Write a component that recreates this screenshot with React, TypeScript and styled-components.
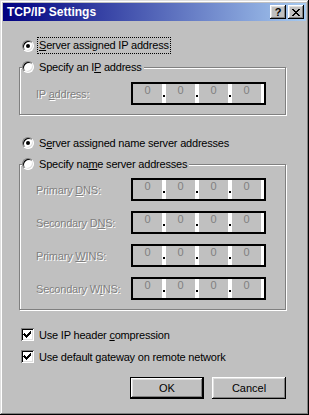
import styled, { createGlobalStyle } from 'styled-components'
import { ReactNode } from 'react'

const GlobalStyle = createGlobalStyle`
	html, body {
		margin: 0;
		padding: 0;
		background: #c0c0c0;
	}
	body {
		font-family: "Liberation Sans", Arial, sans-serif;
		font-size: 11px;
		letter-spacing: -0.2px;
		color: #000;
	}
`

const raised = `
	box-shadow: inset -1px -1px 0 #000, inset 1px 1px 0 #fff, inset -2px -2px 0 #808080, inset 2px 2px 0 #dfdfdf;
`

const Window = styled.div`
	width: 309px;
	height: 415px;
	box-sizing: border-box;
	padding: 3px;
	background: #c0c0c0;
	box-shadow: inset -1px -1px 0 #000, inset 1px 1px 0 #dfdfdf, inset -2px -2px 0 #808080, inset 2px 2px 0 #fff;
	display: flex;
	flex-direction: column;
`

const TitleBar = styled.div`
	height: 18px;
	display: flex;
	align-items: center;
	padding: 0 2px 0 4px;
	background: linear-gradient(to right, #000080, #a6caf0);
`

const Title = styled.span`
	color: #fff;
	font-weight: bold;
	font-size: 12px;
	letter-spacing: 0;
`

const TitleButtons = styled.div`
	margin-left: auto;
	display: flex;
	gap: 2px;
`

const TitleButton = styled.span`
	width: 16px;
	height: 14px;
	box-sizing: border-box;
	background: #c0c0c0;
	${raised}
	display: flex;
	align-items: center;
	justify-content: center;
	font-weight: bold;
	font-size: 11px;
	letter-spacing: 0;
	line-height: 1;
`

const Body = styled.div`
	flex: 1;
	display: flex;
	flex-direction: column;
	padding: 16px 20px 0 16px;
`

const OptionRow = styled.div<{ $indent?: number }>`
	height: 17px;
	display: flex;
	align-items: center;
	gap: 5px;
	padding-left: ${({ $indent = 3 }) => $indent}px;
	white-space: nowrap;
`

const Radio = styled.span<{ $checked?: boolean }>`
	position: relative;
	flex: none;
	width: 12px;
	height: 12px;
	box-sizing: border-box;
	border-radius: 50%;
	border: 1px solid;
	border-color: #808080 #fff #fff #808080;
	background: #fff;
	box-shadow: inset 1px 1px 0 #000, inset -1px -1px 0 #dfdfdf;

	&::after {
		content: '';
		display: ${({ $checked }) => ($checked ? 'block' : 'none')};
		position: absolute;
		left: 3px;
		top: 3px;
		width: 4px;
		height: 4px;
		border-radius: 50%;
		background: #000;
	}
`

const CheckBox = styled.span`
	flex: none;
	width: 13px;
	height: 13px;
	box-sizing: border-box;
	background: #fff;
	box-shadow: inset 1px 1px 0 #808080, inset -1px -1px 0 #fff, inset 2px 2px 0 #000, inset -2px -2px 0 #dfdfdf;
	display: flex;
`

const Label = styled.span<{ $focused?: boolean }>`
	line-height: 15px;
	padding: 0 1px;
	margin-left: -2px;
	border: 1px dotted ${({ $focused }) => ($focused ? '#000' : 'transparent')};
`

const Group = styled.div<{ $gap?: number }>`
	position: relative;
	margin-top: 13px;
	border: 1px solid #808080;
	box-shadow: inset 1px 1px 0 #fff, 1px 1px 0 #fff;
	padding: ${({ $gap = 14 }) => $gap}px 18px 9px 16px;
	display: flex;
	flex-direction: column;
	gap: 10px;
`

const Legend = styled.div`
	position: absolute;
	top: -10px;
	left: 2px;
	background: #c0c0c0;
	padding-right: 2px;
`

const FieldRow = styled.div`
	display: flex;
	align-items: center;
	height: 23px;
`

const FieldLabel = styled.span`
	width: 95px;
	color: #808080;
	text-shadow: 1px 1px 0 #fff;
	white-space: nowrap;
`

const IpBox = styled.div`
	display: flex;
	width: 135px;
	height: 23px;
	box-sizing: border-box;
	border: 2px solid #000;
	background: #fff;
`

const Octet = styled.span`
	flex: 1;
	background: #c0c0c0;
	color: #808080;
	text-align: center;
	line-height: 13px;
	font-size: 11px;
`

const Dot = styled.span<{ $last?: boolean }>`
	width: ${({ $last }) => ($last ? 3 : 4)}px;
	box-sizing: border-box;
	display: flex;
	align-items: flex-end;
	justify-content: center;
	padding-bottom: 6px;

	&::before {
		content: '';
		display: ${({ $last }) => ($last ? 'none' : 'block')};
		width: 2px;
		height: 2px;
		background: #000;
	}
`

const Spacer = styled.div<{ $h: number }>`
	height: ${({ $h }) => $h}px;
	flex: none;
`

const ButtonRow = styled.div`
	margin-top: 12px;
	display: flex;
	justify-content: flex-end;
	gap: 8px;
`

const Button = styled.span<{ $default?: boolean }>`
	width: 74px;
	height: 22px;
	box-sizing: border-box;
	display: flex;
	align-items: center;
	justify-content: center;
	background: #c0c0c0;
	letter-spacing: 0;
	${({ $default }) =>
		$default
			? `border: 1px solid #000; box-shadow: inset -1px -1px 0 #000, inset 1px 1px 0 #fff, inset -2px -2px 0 #808080, inset 2px 2px 0 #dfdfdf;`
			: raised}
`

const IpField = ({ label }: { label: ReactNode }) => (
	<FieldRow>
		<FieldLabel>{label}</FieldLabel>
		<IpBox>
			<Octet>0</Octet>
			<Dot />
			<Octet>0</Octet>
			<Dot />
			<Octet>0</Octet>
			<Dot />
			<Octet>0</Octet>
			<Dot $last />
		</IpBox>
	</FieldRow>
)

const Check = () => (
	<CheckBox>
		<svg width="13" height="13" viewBox="0 0 13 13" shapeRendering="crispEdges">
			<path d="M3 5h1v1h1v1h1v-1h1v-1h1v-1h1v-1h1v3h-1v1h-1v1h-1v1h-1v1h-1v-1h-1v-1h-1v-1h-1z" fill="#000" />
		</svg>
	</CheckBox>
)

export default function App() {
	return (
		<>
			<GlobalStyle />
			<Window>
				<TitleBar>
					<Title>TCP/IP Settings</Title>
					<TitleButtons>
						<TitleButton>?</TitleButton>
						<TitleButton>
							<svg width="8" height="7" viewBox="0 0 8 7" shapeRendering="crispEdges">
								<path d="M0 0h2v1h1v1h2v-1h1v-1h2v1h-1v1h-1v1h-1v1h1v1h1v1h1v1h-2v-1h-1v-1h-2v1h-1v1h-2v-1h1v-1h1v-1h1v-1h-1v-1h-1z" fill="#000" />
							</svg>
						</TitleButton>
					</TitleButtons>
				</TitleBar>
				<Body>
					<OptionRow>
						<Radio $checked />
						<Label $focused>
							<u>S</u>erver assigned IP address
						</Label>
					</OptionRow>
					<Group>
						<Legend>
							<OptionRow $indent={0}>
								<Radio />
								<span>
									Specify an I<u>P</u> address
								</span>
							</OptionRow>
						</Legend>
						<IpField
							label={
								<>
									IP <u>a</u>ddress:
								</>
							}
						/>
					</Group>
					<Spacer $h={19} />
					<OptionRow>
						<Radio $checked />
						<span>
							S<u>e</u>rver assigned name server addresses
						</span>
					</OptionRow>
					<Group $gap={13}>
						<Legend>
							<OptionRow $indent={0}>
								<Radio />
								<span>
									Specify na<u>m</u>e server addresses
								</span>
							</OptionRow>
						</Legend>
						<IpField
							label={
								<>
									Primary <u>D</u>NS:
								</>
							}
						/>
						<IpField
							label={
								<>
									Secondary D<u>N</u>S:
								</>
							}
						/>
						<IpField
							label={
								<>
									Primary <u>W</u>INS:
								</>
							}
						/>
						<IpField
							label={
								<>
									Secondary W<u>I</u>NS:
								</>
							}
						/>
					</Group>
					<Spacer $h={16} />
					<OptionRow $indent={2}>
						<Check />
						<span>
							Use IP header <u>c</u>ompression
						</span>
					</OptionRow>
					<Spacer $h={5} />
					<OptionRow $indent={2}>
						<Check />
						<span>
							Use default <u>g</u>ateway on remote network
						</span>
					</OptionRow>
					<ButtonRow>
						<Button $default>OK</Button>
						<Button>Cancel</Button>
					</ButtonRow>
				</Body>
			</Window>
		</>
	)
}
